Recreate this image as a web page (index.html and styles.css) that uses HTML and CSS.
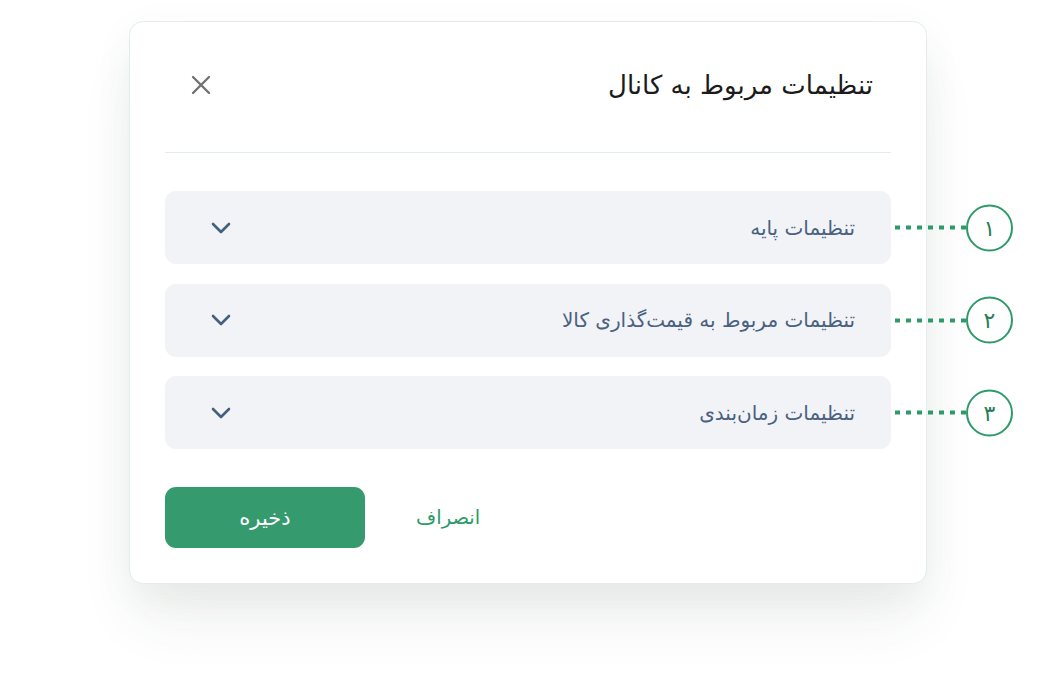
FILE: index.html
```html
<!DOCTYPE html>
<html lang="fa">
<head>
<meta charset="utf-8">
<title>تنظیمات مربوط به کانال</title>
<link rel="stylesheet" href="styles.css">
</head>
<body>
<div class="stage">
  <div class="card" dir="rtl">
    <div class="header">
      <h1 class="title">تنظیمات مربوط به کانال</h1>
      <button class="close" aria-label="بستن">
        <svg width="20" height="20" viewBox="0 0 20 20"><path d="M2 2L18 18M18 2L2 18" stroke="#707070" stroke-width="2.3" stroke-linecap="round" fill="none"/></svg>
      </button>
    </div>
    <div class="divider"></div>
    <div class="list">
      <div class="item">
        <span class="label">تنظیمات پایه</span>
        <svg class="chev" width="20" height="12" viewBox="0 0 20 12"><polyline points="2,2 10,10 18,2" stroke="#44607f" stroke-width="2.6" fill="none" stroke-linecap="round" stroke-linejoin="round"/></svg>
        <div class="note"><span class="circle">۱</span><span class="dots"></span></div>
      </div>
      <div class="item">
        <span class="label">تنظیمات مربوط به قیمت‌گذاری کالا</span>
        <svg class="chev" width="20" height="12" viewBox="0 0 20 12"><polyline points="2,2 10,10 18,2" stroke="#44607f" stroke-width="2.6" fill="none" stroke-linecap="round" stroke-linejoin="round"/></svg>
        <div class="note"><span class="circle">۲</span><span class="dots"></span></div>
      </div>
      <div class="item">
        <span class="label">تنظیمات زمان‌بندی</span>
        <svg class="chev" width="20" height="12" viewBox="0 0 20 12"><polyline points="2,2 10,10 18,2" stroke="#44607f" stroke-width="2.6" fill="none" stroke-linecap="round" stroke-linejoin="round"/></svg>
        <div class="note"><span class="circle">۳</span><span class="dots"></span></div>
      </div>
    </div>
    <div class="footer">
      <button class="cancel">انصراف</button>
      <button class="save">ذخیره</button>
    </div>
  </div>
</div>
</body>
</html>
```
FILE: styles.css
```css
* { box-sizing: border-box; }
html, body { margin: 0; padding: 0; background: #ffffff; }
body {
  font-family: "DejaVu Sans", "Noto Sans", sans-serif;
  width: 1056px;
  height: 686px;
  overflow: hidden;
}
.stage {
  padding: 21px 0 0 129px;
}
.card {
  width: 798px;
  height: 563px;
  background: #fff;
  border: 1px solid #e4ecec;
  border-radius: 14px;
  padding: 35px;
  box-shadow: 0 40px 60px -8px rgba(40, 70, 60, 0.09), 0 10px 40px rgba(40, 70, 60, 0.05);
}
.header {
  height: 56px;
  display: flex;
  align-items: center;
  justify-content: space-between;
  padding: 0 18px 0 16px;
}
.title {
  margin: 0;
  font-size: 26px;
  font-weight: normal;
  color: #1b1b1b;
}
.close {
  width: 40px;
  height: 40px;
  border: 0;
  background: none;
  padding: 0;
  display: flex;
  align-items: center;
  justify-content: center;
  cursor: pointer;
}
.divider {
  height: 1px;
  background: #e2eceb;
  margin-top: 39px;
}
.list {
  margin-top: 38px;
  display: flex;
  flex-direction: column;
  gap: 19.5px;
}
.item {
  position: relative;
  height: 73px;
  background: #f2f3f6;
  border-radius: 11px;
  display: flex;
  align-items: center;
  justify-content: space-between;
  padding: 0 36px 0 46px;
}
.label {
  font-size: 20px;
  color: #4a6180;
}
.chev { display: block; }
.note {
  position: absolute;
  top: 50%;
  right: -122px;
  transform: translateY(-50%);
  display: flex;
  align-items: center;
  direction: rtl;
}
.circle {
  width: 47px;
  height: 47px;
  border: 2px solid #2e9a6a;
  border-radius: 50%;
  display: flex;
  align-items: center;
  justify-content: center;
  font-size: 22px;
  color: #2b7d58;
}
.dots {
  width: 75px;
  height: 4px;
  background: repeating-linear-gradient(to left, #2e9a6a 0 5px, transparent 5px 11px);
}
.footer {
  margin-top: 38px;
  display: flex;
  align-items: center;
  justify-content: flex-end;
  gap: 51px;
}
.cancel {
  border: 0;
  background: none;
  padding: 0;
  font-family: inherit;
  font-size: 19.5px;
  color: #2e9a6a;
  cursor: pointer;
}
.save {
  width: 200px;
  height: 61px;
  border: 0;
  border-radius: 11px;
  background: #359a6e;
  color: #fff;
  font-family: inherit;
  font-size: 21px;
  cursor: pointer;
}
```
